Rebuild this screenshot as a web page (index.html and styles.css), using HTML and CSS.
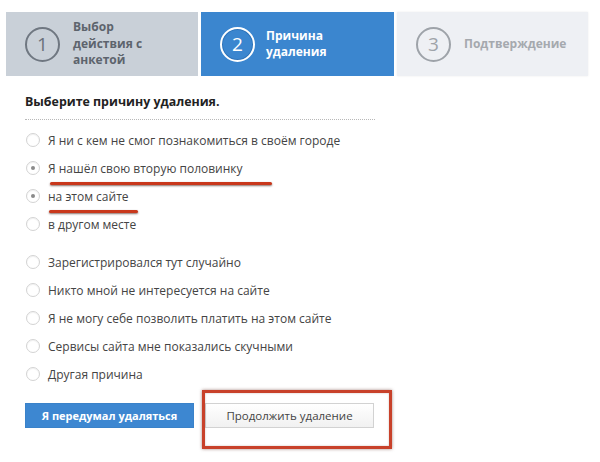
FILE: index.html
```html
<!DOCTYPE html>
<html lang="ru">
<head>
<meta charset="utf-8">
<link rel="stylesheet" href="styles.css">
</head>
<body>
<div class="page">
  <div class="steps">
    <div class="step step-done">
      <span class="num">1</span>
      <span class="label">Выбор<br>действия с<br>анкетой</span>
    </div>
    <div class="step step-active">
      <span class="num">2</span>
      <span class="label">Причина<br>удаления</span>
    </div>
    <div class="step step-next">
      <span class="num">3</span>
      <span class="label">Подтверждение</span>
    </div>
  </div>

  <div class="content">
    <h2 class="title">Выберите причину удаления.</h2>
    <ul class="reasons">
      <li class="reason"><span class="radio"></span>Я ни с кем не смог познакомиться в своём городе</li>
      <li class="reason"><span class="radio checked"></span><span class="mark mark-long">Я нашёл свою вторую половинку</span></li>
      <li class="reason"><span class="radio checked"></span><span class="mark mark-short">на этом сайте</span></li>
      <li class="reason"><span class="radio"></span>в другом месте</li>
      <li class="reason group-start"><span class="radio"></span>Зарегистрировался тут случайно</li>
      <li class="reason"><span class="radio"></span>Никто мной не интересуется на сайте</li>
      <li class="reason"><span class="radio"></span>Я не могу себе позволить платить на этом сайте</li>
      <li class="reason"><span class="radio"></span>Сервисы сайта мне показались скучными</li>
      <li class="reason"><span class="radio"></span>Другая причина</li>
    </ul>
    <div class="actions">
      <button class="btn btn-primary">Я передумал удаляться</button>
      <span class="highlight">
        <button class="btn btn-default">Продолжить удаление</button>
      </span>
    </div>
  </div>
</div>
</body>
</html>
```

FILE: styles.css
```css
html, body {
  margin: 0;
  padding: 0;
  background: #ffffff;
}
body {
  font-family: "Open Sans", "DejaVu Sans", sans-serif;
  color: #333;
}
.page {
  width: 600px;
  height: 462px;
  padding-top: 12px;
  box-sizing: border-box;
}
.steps {
  display: flex;
  gap: 3px;
  margin-left: 6px;
  width: 582px;
  height: 64px;
}
.step {
  display: flex;
  align-items: center;
  box-sizing: border-box;
  height: 64px;
}
.step-done {
  width: 192px;
  background: #c9d0d8;
  padding-left: 19px;
}
.step-active {
  width: 193px;
  background: #3b86cf;
  padding-left: 19px;
}
.step-next {
  width: 191px;
  background: #eef0f4;
  padding-left: 19px;
  box-shadow: 0 0 2px rgba(0,0,0,0.08);
}
.num {
  width: 31px;
  height: 31px;
  border-radius: 50%;
  border: 2px solid #6f7781;
  color: #6a717b;
  display: flex;
  align-items: center;
  justify-content: center;
  font-size: 19px;
  flex: none;
  margin-right: 13px;
}
.step-active .num {
  border-color: #ffffff;
  background: #3b86cf;
  box-shadow: 0 0 0 1px #2e73b8 inset;
  color: #ffffff;
  border-width: 2px;
}
.step-next .num {
  border-color: #9ea3a9;
  color: #9ea3a9;
  margin-right: 14px;
}
.label {
  font-weight: 700;
  font-size: 12px;
  line-height: 16.5px;
  color: #5d646d;
}
.step-active .label {
  color: #ffffff;
  margin-left: -2px;
}
.step-next .label {
  color: #a5a9ae;
  margin-left: -1px;
}
.content {
  padding-left: 25px;
}
.title {
  margin: 17px 0 0 0;
  font-size: 12.4px;
  font-weight: 700;
  color: #222;
  line-height: 18px;
  width: 350px;
  padding-bottom: 8px;
  border-bottom: 1px dotted #b8b8b8;
}
.reasons {
  list-style: none;
  margin: 6px 0 0 0;
  padding: 0;
}
.reason {
  display: flex;
  align-items: center;
  height: 28px;
  font-size: 12px;
  color: #444;
}
.group-start {
  margin-top: 10px;
}
.radio {
  width: 14px;
  height: 14px;
  border-radius: 50%;
  border: 1px solid #d3d3d3;
  background: #fff;
  box-sizing: border-box;
  margin: 0 8px 0 1px;
  flex: none;
  position: relative;
  box-shadow: inset 0 1px 1px rgba(0,0,0,0.06);
}
.radio.checked::after {
  content: "";
  position: absolute;
  left: 4px;
  top: 4px;
  width: 4px;
  height: 4px;
  border-radius: 50%;
  background: #8a8a8a;
}
.mark {
  position: relative;
}
.mark::after {
  content: "";
  position: absolute;
  height: 3px;
  border-radius: 2px;
  background: #c9381c;
  box-shadow: 0 1px 2px rgba(60,20,10,0.6);
}
.mark-long::after {
  left: 2px;
  width: 222px;
  top: 22px;
}
.mark-short::after {
  left: 1px;
  width: 89px;
  top: 22px;
}
.actions {
  display: flex;
  align-items: center;
  margin-top: 15px;
  gap: 11px;
}
.btn {
  font-family: "Open Sans", "DejaVu Sans", sans-serif;
  height: 25px;
  box-sizing: border-box;
  padding: 0;
  cursor: pointer;
}
.btn-primary {
  width: 169px;
  background: #3d87d1;
  border: 1px solid #3a82c9;
  color: #ffffff;
  font-weight: 700;
  font-size: 11px;
}
.btn-default {
  width: 169px;
  background: linear-gradient(#ffffff, #f1f1f1);
  border: 1px solid #d2d2d2;
  color: #444;
  font-size: 11.5px;
  display: block;
}
.highlight {
  position: relative;
  display: block;
}
.highlight::before {
  content: "";
  position: absolute;
  left: -3px;
  top: -13px;
  width: 184px;
  height: 53px;
  border: 3px solid #c8412a;
  box-shadow: 0 0 3px rgba(80,20,10,0.5), inset 0 0 2px rgba(80,20,10,0.3);
  pointer-events: none;
}
```
